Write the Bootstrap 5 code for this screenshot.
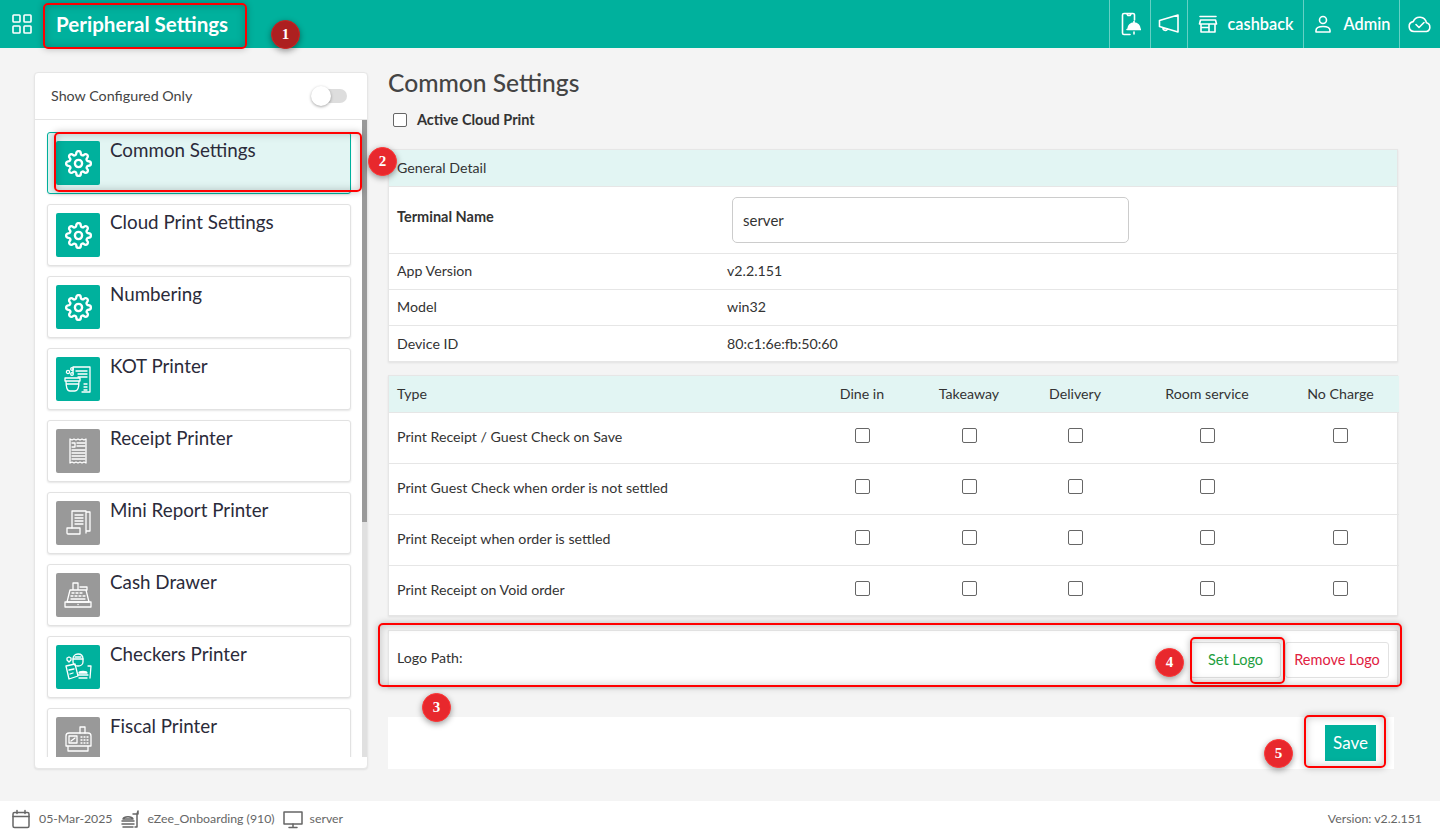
<!DOCTYPE html>
<html lang="en">
<head>
<meta charset="utf-8">
<title>Peripheral Settings</title>
<link href="https://cdn.jsdelivr.net/npm/bootstrap@5.3.0/dist/css/bootstrap.min.css" rel="stylesheet">
<style>
html,body{height:837px;overflow:hidden}
body{background:#f4f4f4;font-family:"Lato","Open Sans",sans-serif;font-size:14.2px;color:#333;position:relative}
svg{display:block;fill:none;stroke:currentColor;stroke-width:1.6;stroke-linecap:round;stroke-linejoin:round}
.topbar{height:48px;background:#00b19d;color:#fff}
.grid-ic{width:24px;height:24px;margin-left:10px}
.page-title{font-size:20.6px;font-weight:700;margin:0 0 0 22px;line-height:48px}
.top-cell{height:48px;border-left:1px solid rgba(255,255,255,.4);font-size:16.3px;font-weight:600}
.tc-a{width:41px}.tc-b{width:37px}.tc-c{width:116px;gap:10px}.tc-d{width:96px;gap:11px}.tc-e{width:41px}
.body-row{height:753px;padding:24px 42px 0 34px;gap:20px}
.side-panel{width:334px;height:697px;background:#fff;border:1px solid #e6e6e6;border-radius:4px;box-shadow:0 1px 2px rgba(0,0,0,.08);position:relative}
.side-head{height:47px;padding:0 20px 0 16px;border-bottom:1px solid #e4e4e4;font-size:14.3px;color:#444}
.sw-track{width:35px;height:14px;border-radius:7px;background:#ddd;position:relative}
.sw-knob{position:absolute;left:-1px;top:-3px;width:20px;height:20px;border-radius:50%;background:#fff;box-shadow:0 1px 3px rgba(0,0,0,.35)}
.side-list{height:637px;overflow:hidden;padding:12px 16px 0 12px;position:relative}
.bar-track{position:absolute;right:0;top:0;width:5px;height:637px;background:#e0e0e0}
.bar-thumb{position:absolute;right:0;top:0;width:5px;height:402px;background:#999}
.dev-item{height:62px;margin-bottom:10px;padding:8px;gap:10px;background:#fff;border:1px solid #e2e2e2;border-radius:3px;box-shadow:0 1px 2px rgba(0,0,0,.1);font-size:18.8px;line-height:18px;color:#2b2b3a}
.dev-item.is-on{background:#e2f5f3;border-color:#00b19d}
.dev-ic{width:44px;height:44px;flex:none;border-radius:2px;color:#fff;background:#00b19d}
.dev-ic.off{background:#999}
.dev-ic svg{width:30px;height:30px;stroke-width:1.3}
.dev-ic svg.gear{width:27px;height:27px;stroke-width:2.1}
.right-col{width:1010px}
.page-h{font-size:24.6px;line-height:20px;color:#444;margin:1px 0 0}
.cloud-line{margin:19px 0 21px 5px;height:16px;gap:10px;font-weight:700;font-size:14.5px;color:#333}
.box-check.form-check-input[type=checkbox]{width:14px;height:14px;margin:0;border:1px solid #666;border-radius:2px;flex:none;background-color:#fff}
.pane{background:#fff;border:1px solid #e6e6e6;box-shadow:0 1px 2px rgba(0,0,0,.08);margin-bottom:13px}
.pane .table{margin:0;table-layout:fixed;--bs-table-bg:transparent;color:#333;font-size:14.2px}
.pane .table td,.pane .table th{border-color:#e6e6e6;padding:0 8px;vertical-align:middle;font-weight:400}
.pane .table tr:last-child td{border-bottom:0}
.teal-row th,.teal-row td{background:#e2f5f3!important}
.c-lab{width:330px}
.h-head{height:36px}.h-term{height:67px}.h-info{height:36px}
.pane .table .term-cell{padding-top:19px;vertical-align:top;font-weight:700;font-size:14.5px}
.term-input.form-control{width:397px;height:46px;margin-left:5px;border:1px solid #ccc;border-radius:5px;font-size:15px;color:#333;padding:0 10px}
.c1{width:426px}.c2{width:94px}.c3{width:120px}.c4{width:92px}.c5{width:172px}.c6{width:106px}
.h-type{height:36px}.h-row{height:51px}.h-row:last-child{height:50px}
.pane .table .h-row td{padding-bottom:2px}
.pane .table .ctr{text-align:center;padding-left:0;padding-right:0}
.pane .table .ctr-last{text-align:center;padding-left:0;padding-right:11px}
.ctr .box-check.form-check-input[type=checkbox],.ctr-last .box-check.form-check-input[type=checkbox]{width:15px;height:15px;display:inline-block;vertical-align:middle;margin-top:-5px}
.pane.logo-pane{height:58px;padding:0 8px 2px;margin:14px 0 29px;gap:4px}
.plain-btn{height:36px;background:#fff;border:1px solid #e2e2e2;border-radius:3px;font-size:14.5px;padding:0;box-shadow:none;margin-top:4px}
.btn.set-btn{width:91px;color:#1e9e3e}
.btn.rem-btn{width:104px;color:#e0213f}
.save-strip{width:1006px;height:52px;background:#fff;padding:8px 18px 0 0}
.btn.save-btn{width:51px;height:36px;background:#00b19d;color:#fff;font-size:17px;border:0;border-radius:0;padding:0}
.foot{position:absolute;left:0;right:0;top:801px;height:36px;background:#fff;padding:0 18px 0 11px;color:#666;font-size:12.3px}
.foot svg{width:20px;height:20px;stroke-width:1.5}
.foot-a{margin:0 7px 0 8px}.foot-b{margin:0 8px 0 8px}.foot-c{margin-left:7px}
.mark-box{position:absolute;border:2px solid #f00;border-radius:5px;box-shadow:0 0 7px rgba(0,0,0,.25),inset 0 0 8px rgba(0,0,0,.22);z-index:5;pointer-events:none}
.mb1{left:43px;top:3px;width:204px;height:46px}
.mb2{left:54px;top:132px;width:308px;height:60px}
.mb3{left:378px;top:623px;width:1024px;height:64px}
.mb4{left:1190px;top:637px;width:95px;height:47px}
.mb5{left:1304px;top:715px;width:82px;height:53px}
.mark-num{position:absolute;width:29px;height:29px;border-radius:50%;background:#e8282d;border:1px solid #f33;color:#fff;font-family:"Liberation Serif",serif;font-weight:700;font-size:15px;line-height:27px;text-align:center;box-shadow:0 2px 6px rgba(0,0,0,.4);z-index:6}
.mn1{left:271px;top:20px;background:#ad2020;border-color:#c22}
.mn2{left:368px;top:147px}
.mn3{left:422px;top:693px}
.mn4{left:1155px;top:648px}
.mn5{left:1264px;top:739px}
</style>
</head>
<body>
<svg width="0" height="0" class="position-absolute">
<symbol id="i-gear" viewBox="0 0 24 24"><circle cx="12" cy="12" r="3.2"/><path d="M19.4 15a1.65 1.65 0 0 0 .33 1.82l.06.06a2 2 0 0 1 0 2.83 2 2 0 0 1-2.83 0l-.06-.06a1.65 1.65 0 0 0-1.82-.33 1.65 1.65 0 0 0-1 1.51V21a2 2 0 0 1-2 2 2 2 0 0 1-2-2v-.09A1.65 1.65 0 0 0 9 19.4a1.65 1.65 0 0 0-1.82.33l-.06.06a2 2 0 0 1-2.83 0 2 2 0 0 1 0-2.83l.06-.06a1.65 1.65 0 0 0 .33-1.82 1.65 1.65 0 0 0-1.51-1H3a2 2 0 0 1-2-2 2 2 0 0 1 2-2h.09A1.65 1.65 0 0 0 4.6 9a1.65 1.65 0 0 0-.33-1.82l-.06-.06a2 2 0 0 1 0-2.83 2 2 0 0 1 2.83 0l.06.06a1.65 1.65 0 0 0 1.82.33H9a1.65 1.65 0 0 0 1-1.51V3a2 2 0 0 1 2-2 2 2 0 0 1 2 2v.09a1.65 1.65 0 0 0 1 1.51 1.65 1.65 0 0 0 1.82-.33l.06-.06a2 2 0 0 1 2.83 0 2 2 0 0 1 0 2.83l-.06.06a1.65 1.65 0 0 0-.33 1.82V9a1.65 1.65 0 0 0 1.51 1H21a2 2 0 0 1 2 2 2 2 0 0 1-2 2h-.09a1.65 1.65 0 0 0-1.51 1z"/></symbol>
<symbol id="i-kot" viewBox="0 0 30 30"><path d="M10 9V3h17v25H19"/><path d="M13 7h11M15 10h9M15 13h9M21 20h3M21 23h3M21 26h3"/><circle cx="5" cy="8" r="1.6"/><circle cx="9" cy="5" r="1.3"/><circle cx="9" cy="10" r="1.3"/><path d="M2 14h15v3H2zM3 17c0 6 1 10 4 10h5c3 0 4-4 4-10M3 20h13"/></symbol>
<symbol id="i-rcpt" viewBox="0 0 30 30"><path d="M7 3l2 1 2-1 2 1 2-1 2 1 2-1 2 1 2-1v24l-2-1-2 1-2-1-2 1-2-1-2 1-2-1-2 1z"/><path d="M14 7h8M14 10h8M9 14h13M9 17h13M9 20h13M9 23h13M9 7h3v4H9"/></symbol>
<symbol id="i-mini" viewBox="0 0 30 30"><path d="M9 20V3h14v22M23 4h4v19h-4"/><path d="M12 7h8M12 10h8M12 13h8M12 16h8"/><path d="M4 20h13v6H5a1 1 0 0 1-1-1zM17 20v6"/></symbol>
<symbol id="i-cash" viewBox="0 0 30 30"><path d="M10 10V3h5v7M17 7h7v3h-5M7 10h16l3 12H4z"/><path d="M9 13h2M13 13h2M17 13h2M8 16h2M12 16h2M16 16h2M20 16h2M8 19h14"/><path d="M2 22h26v5H2zM15 24.5h.1"/></symbol>
<symbol id="i-chk" viewBox="0 0 30 30"><path d="M10 7c0-3 2-5 5-5s5 2 5 5v3c0 2-2 4-5 4s-5-2-5-4z"/><path d="M10 7h10M12 5h6"/><path d="M3 14l9-2 3 12-9 3zM6 18l5-1M7 22l3-1"/><path d="M4 6l2-1 2 1v2l-2 2-2-2z"/><path d="M16 21c0-2 8-2 8 0zM15 23h10M16 26h8M25 14h3l-1 12"/></symbol>
<symbol id="i-fisc" viewBox="0 0 30 30"><path d="M17 9V3h5v6"/><path d="M3 12c0-2 1-3 3-3h19c2 0 3 1 3 3v10H3zM5 22v5h20v-5"/><path d="M6 12h8v7H6zM8 17l4-3M18 13h1M21 13h1M24 13h1M18 16h1M21 16h1M24 16h1M18 19h1M21 19h1M24 19h1"/></symbol>
</svg>

<nav class="topbar d-flex align-items-center justify-content-between">
  <div class="d-flex align-items-center">
    <svg class="grid-ic" viewBox="0 0 24 24" stroke-width="2"><rect x="3" y="3" width="7" height="7" rx=".8"/><rect x="14" y="3" width="7" height="7" rx=".8"/><rect x="3" y="14" width="7" height="7" rx=".8"/><rect x="14" y="14" width="7" height="7" rx=".8"/></svg>
    <h1 class="page-title">Peripheral Settings</h1>
  </div>
  <div class="d-flex">
    <div class="top-cell tc-a d-flex align-items-center justify-content-center"><svg width="22" height="24" viewBox="0 0 22 24" stroke-width="2"><path d="M11 22.500H5a1.500 1.500 0 0 1-1.500-1.500V3A1.500 1.500 0 0 1 5 1.500h9A1.500 1.500 0 0 1 15.500 3v5M8 2l1 1.500h2L12 2M15 22v-2"/><path d="M9 17a6 6 0 0 1 12 0zM8 17.500h13.500" fill="#fff"/><path d="M15 9.500v1.500"/></svg></div>
    <div class="top-cell tc-b d-flex align-items-center justify-content-center"><svg width="22" height="22" viewBox="0 0 22 22" stroke-width="1.800"><path d="M1.500 7.500L20 2v17L1.500 13.500zM5 14.500c-.5 3 3.500 4 4.500 1.200"/></svg></div>
    <div class="top-cell tc-c d-flex align-items-center justify-content-center"><svg width="20" height="20" viewBox="0 0 20 20" stroke-width="2"><path d="M2 2.500h16M2.500 6h15L18.500 10h-17zM3 10v8h14v-8M3 13.500h8M11 10v8"/></svg><span>cashback</span></div>
    <div class="top-cell tc-d d-flex align-items-center justify-content-center"><svg width="20" height="20" viewBox="0 0 20 20" stroke-width="2"><circle cx="10" cy="6" r="3.500"/><path d="M3 18v-1.500c0-2.500 3-4 7-4s7 1.500 7 4V18z"/></svg><span>Admin</span></div>
    <div class="top-cell tc-e d-flex align-items-center justify-content-center"><svg width="26" height="20" viewBox="0 0 26 20" stroke-width="1.800"><path d="M7 17.500a5 5 0 0 1-.8-9.900 7 7 0 0 1 13.300 1.200 4.500 4.500 0 0 1 0 8.700zM9 10.500l3 3 5-5"/></svg></div>
  </div>
</nav>

<main class="body-row d-flex">
  <aside class="side-panel flex-shrink-0">
    <div class="side-head d-flex align-items-center justify-content-between">
      <span>Show Configured Only</span>
      <div class="sw-track"><span class="sw-knob"></span></div>
    </div>
    <div class="side-list">
      <div class="dev-item is-on d-flex"><div class="dev-ic d-flex align-items-center justify-content-center"><svg class="gear"><use href="#i-gear"/></svg></div><div>Common Settings</div></div>
      <div class="dev-item d-flex"><div class="dev-ic d-flex align-items-center justify-content-center"><svg class="gear"><use href="#i-gear"/></svg></div><div>Cloud Print Settings</div></div>
      <div class="dev-item d-flex"><div class="dev-ic d-flex align-items-center justify-content-center"><svg class="gear"><use href="#i-gear"/></svg></div><div>Numbering</div></div>
      <div class="dev-item d-flex"><div class="dev-ic d-flex align-items-center justify-content-center"><svg><use href="#i-kot"/></svg></div><div>KOT Printer</div></div>
      <div class="dev-item d-flex"><div class="dev-ic off d-flex align-items-center justify-content-center"><svg><use href="#i-rcpt"/></svg></div><div>Receipt Printer</div></div>
      <div class="dev-item d-flex"><div class="dev-ic off d-flex align-items-center justify-content-center"><svg><use href="#i-mini"/></svg></div><div>Mini Report Printer</div></div>
      <div class="dev-item d-flex"><div class="dev-ic off d-flex align-items-center justify-content-center"><svg><use href="#i-cash"/></svg></div><div>Cash Drawer</div></div>
      <div class="dev-item d-flex"><div class="dev-ic d-flex align-items-center justify-content-center"><svg><use href="#i-chk"/></svg></div><div>Checkers Printer</div></div>
      <div class="dev-item d-flex"><div class="dev-ic off d-flex align-items-center justify-content-center"><svg><use href="#i-fisc"/></svg></div><div>Fiscal Printer</div></div>
      <div class="bar-track"></div><div class="bar-thumb"></div>
    </div>
  </aside>

  <section class="right-col">
    <h2 class="page-h">Common Settings</h2>
    <label class="cloud-line d-flex align-items-center"><input type="checkbox" class="box-check form-check-input"><span>Active Cloud Print</span></label>
    <div class="pane">
      <table class="table">
        <colgroup><col class="c-lab"><col></colgroup>
        <tr class="teal-row h-head"><td colspan="2">General Detail</td></tr>
        <tr class="h-term"><td class="term-cell">Terminal Name</td><td><input class="term-input form-control" type="text" value="server"></td></tr>
        <tr class="h-info"><td>App Version</td><td>v2.2.151</td></tr>
        <tr class="h-info"><td>Model</td><td>win32</td></tr>
        <tr class="h-info"><td>Device ID</td><td>80:c1:6e:fb:50:60</td></tr>
      </table>
    </div>
    <div class="pane">
      <table class="table">
        <colgroup><col class="c1"><col class="c2"><col class="c3"><col class="c4"><col class="c5"><col class="c6"></colgroup>
        <tr class="teal-row h-type"><td>Type</td><td class="ctr">Dine in</td><td class="ctr">Takeaway</td><td class="ctr">Delivery</td><td class="ctr">Room service</td><td class="ctr-last">No Charge</td></tr>
        <tr class="h-row"><td>Print Receipt / Guest Check on Save</td><td class="ctr"><input type="checkbox" class="box-check form-check-input"></td><td class="ctr"><input type="checkbox" class="box-check form-check-input"></td><td class="ctr"><input type="checkbox" class="box-check form-check-input"></td><td class="ctr"><input type="checkbox" class="box-check form-check-input"></td><td class="ctr-last"><input type="checkbox" class="box-check form-check-input"></td></tr>
        <tr class="h-row"><td>Print Guest Check when order is not settled</td><td class="ctr"><input type="checkbox" class="box-check form-check-input"></td><td class="ctr"><input type="checkbox" class="box-check form-check-input"></td><td class="ctr"><input type="checkbox" class="box-check form-check-input"></td><td class="ctr"><input type="checkbox" class="box-check form-check-input"></td><td class="ctr-last"></td></tr>
        <tr class="h-row"><td>Print Receipt when order is settled</td><td class="ctr"><input type="checkbox" class="box-check form-check-input"></td><td class="ctr"><input type="checkbox" class="box-check form-check-input"></td><td class="ctr"><input type="checkbox" class="box-check form-check-input"></td><td class="ctr"><input type="checkbox" class="box-check form-check-input"></td><td class="ctr-last"><input type="checkbox" class="box-check form-check-input"></td></tr>
        <tr class="h-row"><td>Print Receipt on Void order</td><td class="ctr"><input type="checkbox" class="box-check form-check-input"></td><td class="ctr"><input type="checkbox" class="box-check form-check-input"></td><td class="ctr"><input type="checkbox" class="box-check form-check-input"></td><td class="ctr"><input type="checkbox" class="box-check form-check-input"></td><td class="ctr-last"><input type="checkbox" class="box-check form-check-input"></td></tr>
      </table>
    </div>
    <div class="pane logo-pane d-flex align-items-center">
      <span class="me-auto">Logo Path:</span>
      <button class="btn plain-btn set-btn" type="button">Set Logo</button>
      <button class="btn plain-btn rem-btn" type="button">Remove Logo</button>
    </div>
    <div class="save-strip d-flex justify-content-end align-items-start">
      <button class="btn save-btn" type="button">Save</button>
    </div>
  </section>
</main>

<footer class="foot d-flex align-items-center">
  <svg viewBox="0 0 20 20"><rect x="2" y="3.500" width="16" height="15" rx="1.500"/><path d="M2 7.500h16M6 1.500v3M14 1.500v3"/></svg>
  <span class="foot-a">05-Mar-2025</span>
  <svg viewBox="0 0 20 20"><path d="M3 10c1-3 9-3 10 0zM2 12h12M2 15h12M3 18h10M13 5h4l1-3v3M17 5v13h-2"/></svg>
  <span class="foot-b">eZee_Onboarding (910)</span>
  <svg viewBox="0 0 20 20"><rect x="1" y="3" width="18" height="12"/><path d="M10 15v3M6 18.500h8"/></svg>
  <span class="foot-c">server</span>
  <span class="ms-auto">Version: v2.2.151</span>
</footer>

<div class="mark-box mb1"></div>
<div class="mark-box mb2"></div>
<div class="mark-box mb3"></div>
<div class="mark-box mb4"></div>
<div class="mark-box mb5"></div>
<div class="mark-num mn1">1</div>
<div class="mark-num mn2">2</div>
<div class="mark-num mn3">3</div>
<div class="mark-num mn4">4</div>
<div class="mark-num mn5">5</div>
<script src="https://cdn.jsdelivr.net/npm/bootstrap@5.3.0/dist/js/bootstrap.bundle.min.js"></script>
</body>
</html>
